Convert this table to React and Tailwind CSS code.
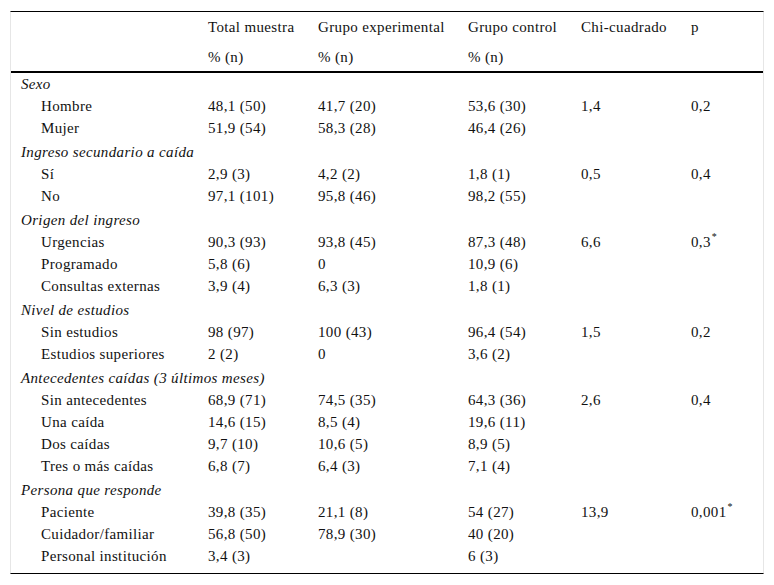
import React from "react";

const groups = [
  {
    title: "Sexo",
    rows: [
      ["Hombre", "48,1 (50)", "41,7 (20)", "53,6 (30)", "1,4", "0,2"],
      ["Mujer", "51,9 (54)", "58,3 (28)", "46,4 (26)", "", ""],
    ],
  },
  {
    title: "Ingreso secundario a caída",
    rows: [
      ["Sí", "2,9 (3)", "4,2 (2)", "1,8 (1)", "0,5", "0,4"],
      ["No", "97,1 (101)", "95,8 (46)", "98,2 (55)", "", ""],
    ],
  },
  {
    title: "Origen del ingreso",
    rows: [
      ["Urgencias", "90,3 (93)", "93,8 (45)", "87,3 (48)", "6,6", "0,3*"],
      ["Programado", "5,8 (6)", "0", "10,9 (6)", "", ""],
      ["Consultas externas", "3,9 (4)", "6,3 (3)", "1,8 (1)", "", ""],
    ],
  },
  {
    title: "Nivel de estudios",
    rows: [
      ["Sin estudios", "98 (97)", "100 (43)", "96,4 (54)", "1,5", "0,2"],
      ["Estudios superiores", "2 (2)", "0", "3,6 (2)", "", ""],
    ],
  },
  {
    title: "Antecedentes caídas (3 últimos meses)",
    rows: [
      ["Sin antecedentes", "68,9 (71)", "74,5 (35)", "64,3 (36)", "2,6", "0,4"],
      ["Una caída", "14,6 (15)", "8,5 (4)", "19,6 (11)", "", ""],
      ["Dos caídas", "9,7 (10)", "10,6 (5)", "8,9 (5)", "", ""],
      ["Tres o más caídas", "6,8 (7)", "6,4 (3)", "7,1 (4)", "", ""],
    ],
  },
  {
    title: "Persona que responde",
    rows: [
      ["Paciente", "39,8 (35)", "21,1 (8)", "54 (27)", "13,9", "0,001*"],
      ["Cuidador/familiar", "56,8 (50)", "78,9 (30)", "40 (20)", "", ""],
      ["Personal institución", "3,4 (3)", "", "6 (3)", "", ""],
    ],
  },
];

function Val({ v }) {
  if (v.endsWith("*")) {
    return (
      <>
        {v.slice(0, -1)}
        <sup className="text-[10px] -top-[0.7em] ml-[1px]">*</sup>
      </>
    );
  }
  return v;
}

export default function App() {
  return (
    <div className="bg-white w-[774px] h-[585px] pt-[11px] px-[10px] text-[#111] text-[15px] tracking-[0.35px] font-['Liberation_Serif','Times_New_Roman',serif]">
      <div className="border-t border-t-black border-x border-x-[#e6e6e6] border-b border-b-black pb-[6px]">
        <table className="table-fixed w-full border-collapse">
          <colgroup>
            <col className="w-[187px]" />
            <col className="w-[110px]" />
            <col className="w-[150px]" />
            <col className="w-[113px]" />
            <col className="w-[110px]" />
            <col className="w-[82px]" />
          </colgroup>
          <thead>
            <tr className="h-[31px]">
              <th className="font-normal text-left pl-[10px]"></th>
              <th className="font-normal text-left pl-[10px]">Total muestra</th>
              <th className="font-normal text-left pl-[10px]">Grupo experimental</th>
              <th className="font-normal text-left pl-[10px]">Grupo control</th>
              <th className="font-normal text-left pl-[10px]">Chi-cuadrado</th>
              <th className="font-normal text-left pl-[10px]">p</th>
            </tr>
            <tr className="h-[29px] border-b-2 border-b-black">
              <th className="font-normal text-left pl-[10px]"></th>
              <th className="font-normal text-left pl-[10px]">% (n)</th>
              <th className="font-normal text-left pl-[10px]">% (n)</th>
              <th className="font-normal text-left pl-[10px]">% (n)</th>
              <th className="font-normal text-left pl-[10px]"></th>
              <th className="font-normal text-left pl-[10px]"></th>
            </tr>
          </thead>
          <tbody>
            {groups.map((g, gi) => (
              <React.Fragment key={g.title}>
                <tr className={gi === 0 ? "h-[22px]" : "h-[24px]"}>
                  <td
                    colSpan={6}
                    className={`italic pl-[10px] leading-[22px] ${gi === 0 ? "" : "pt-[2px]"}`}
                  >
                    {g.title}
                  </td>
                </tr>
                {g.rows.map((r) => (
                  <tr key={r[0]} className="h-[22px]">
                    <td className="pl-[30px] leading-[22px] whitespace-nowrap">{r[0]}</td>
                    {r.slice(1).map((v, i) => (
                      <td key={i} className="pl-[10px] leading-[22px] whitespace-nowrap">
                        <Val v={v} />
                      </td>
                    ))}
                  </tr>
                ))}
              </React.Fragment>
            ))}
          </tbody>
        </table>
      </div>
    </div>
  );
}
